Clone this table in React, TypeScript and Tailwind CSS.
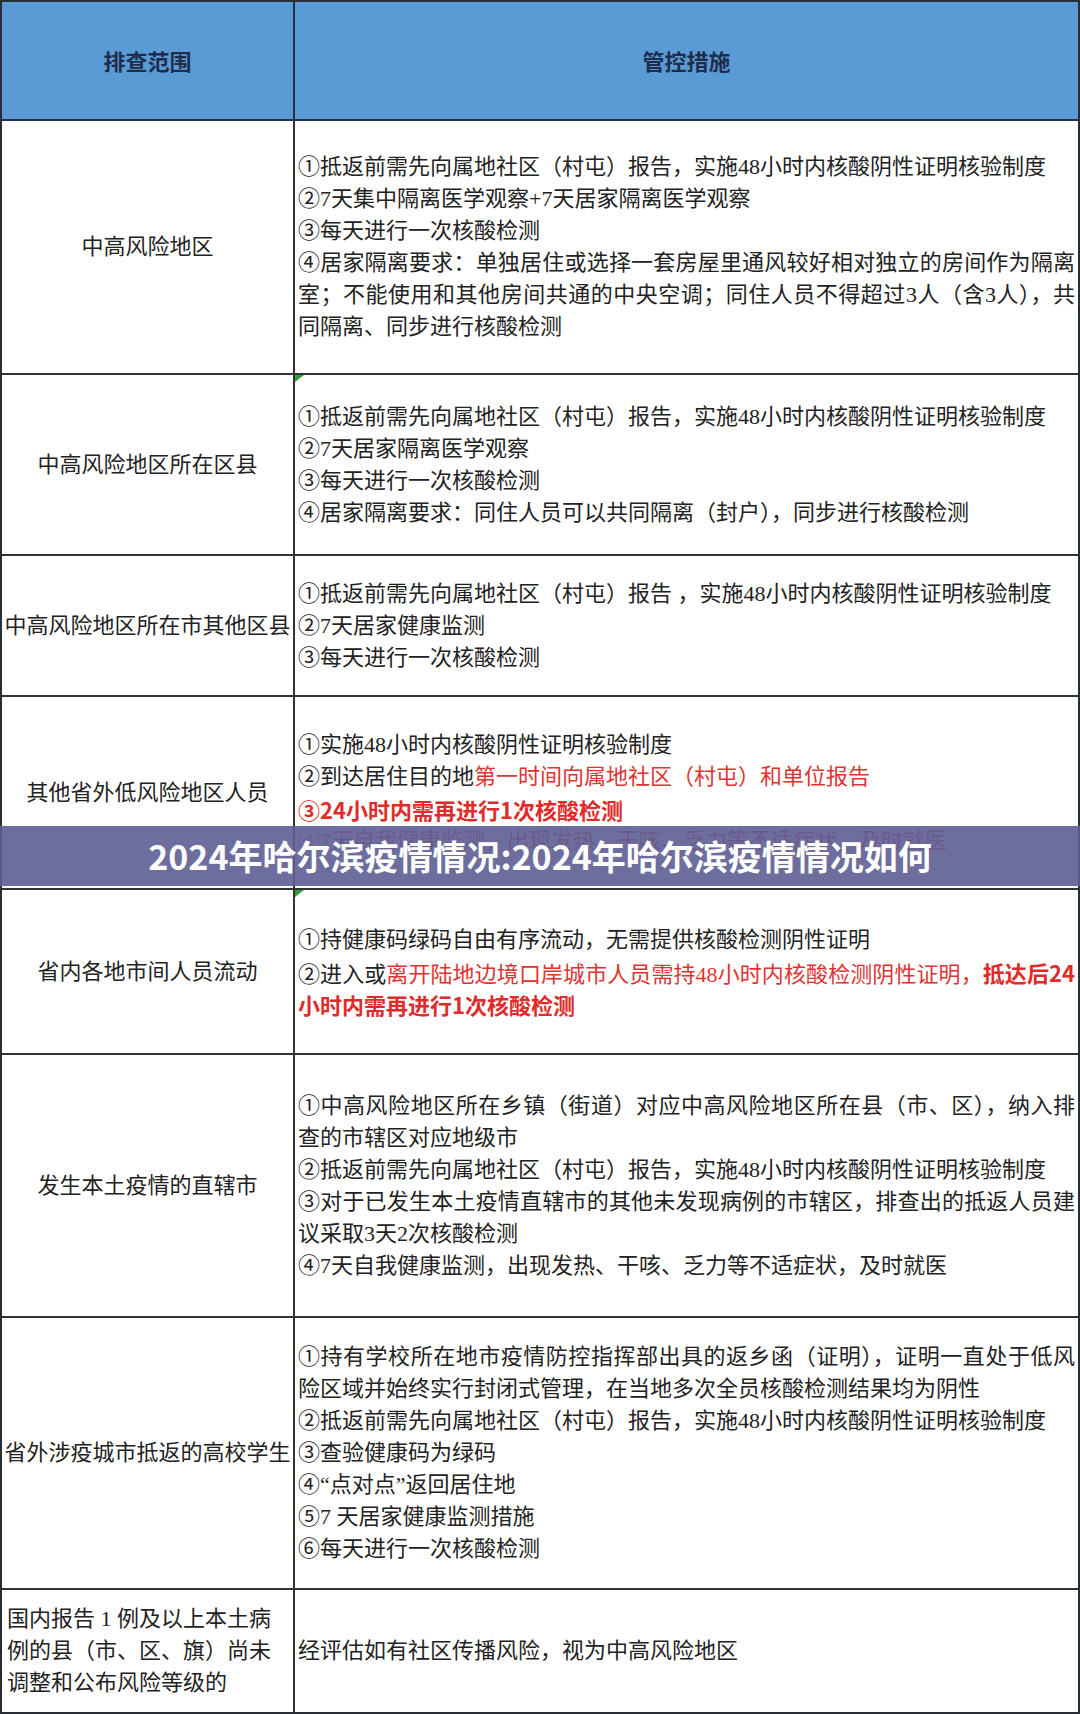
import React from 'react';

// A line segment: plain text, red text ('r') or bold red sans text ('rb')
type Seg = string | { t: string; k: 'r' | 'rb' };

interface Line {
  s: Seg[];
  j?: boolean; // justified to full width (wrapped line)
}

interface Row {
  h: string;
  left: string[];
  leftAlign?: boolean;
  marker?: boolean;
  lines: Line[];
}

const red = (t: string): Seg => ({ t, k: 'r' });
const redBold = (t: string): Seg => ({ t, k: 'rb' });

const rows: Row[] = [
  {
    h: 'h-[254px]',
    left: ['中高风险地区'],
    lines: [
      { s: ['①抵返前需先向属地社区（村屯）报告，实施48小时内核酸阴性证明核验制度'] },
      { s: ['②7天集中隔离医学观察+7天居家隔离医学观察'] },
      { s: ['③每天进行一次核酸检测'] },
      { s: ['④居家隔离要求：单独居住或选择一套房屋里通风较好相对独立的房间作为隔离'], j: true },
      { s: ['室；不能使用和其他房间共通的中央空调；同住人员不得超过3人（含3人），共'], j: true },
      { s: ['同隔离、同步进行核酸检测'] },
    ],
  },
  {
    h: 'h-[181px]',
    left: ['中高风险地区所在区县'],
    marker: true,
    lines: [
      { s: ['①抵返前需先向属地社区（村屯）报告，实施48小时内核酸阴性证明核验制度'] },
      { s: ['②7天居家隔离医学观察'] },
      { s: ['③每天进行一次核酸检测'] },
      { s: ['④居家隔离要求：同住人员可以共同隔离（封户），同步进行核酸检测'] },
    ],
  },
  {
    h: 'h-[141px]',
    left: ['中高风险地区所在市其他区县'],
    lines: [
      { s: ['①抵返前需先向属地社区（村屯）报告 ，实施48小时内核酸阴性证明核验制度'] },
      { s: ['②7天居家健康监测'] },
      { s: ['③每天进行一次核酸检测'] },
    ],
  },
  {
    h: 'h-[193px]',
    left: ['其他省外低风险地区人员'],
    lines: [
      { s: ['①实施48小时内核酸阴性证明核验制度'] },
      { s: ['②到达居住目的地', red('第一时间向属地社区（村屯）和单位报告')] },
      { s: [redBold('③24小时内需再进行1次核酸检测')] },
      { s: [red('④7天自我健康监测，出现发热、干咳、乏力等不适症状，及时就医')] },
    ],
  },
  {
    h: 'h-[165px]',
    left: ['省内各地市间人员流动'],
    marker: true,
    lines: [
      { s: ['①持健康码绿码自由有序流动，无需提供核酸检测阴性证明'] },
      {
        s: ['②进入或', red('离开陆地边境口岸城市人员需持48小时内核酸检测阴性证明，'), redBold('抵达后24')],
        j: true,
      },
      { s: [redBold('小时内需再进行1次核酸检测')] },
    ],
  },
  {
    h: 'h-[263px]',
    left: ['发生本土疫情的直辖市'],
    lines: [
      { s: ['①中高风险地区所在乡镇（街道）对应中高风险地区所在县（市、区），纳入排'], j: true },
      { s: ['查的市辖区对应地级市'] },
      { s: ['②抵返前需先向属地社区（村屯）报告，实施48小时内核酸阴性证明核验制度'] },
      { s: ['③对于已发生本土疫情直辖市的其他未发现病例的市辖区，排查出的抵返人员建'], j: true },
      { s: ['议采取3天2次核酸检测'] },
      { s: ['④7天自我健康监测，出现发热、干咳、乏力等不适症状，及时就医'] },
    ],
  },
  {
    h: 'h-[272px]',
    left: ['省外涉疫城市抵返的高校学生'],
    lines: [
      { s: ['①持有学校所在地市疫情防控指挥部出具的返乡函（证明），证明一直处于低风'], j: true },
      { s: ['险区域并始终实行封闭式管理，在当地多次全员核酸检测结果均为阴性'] },
      { s: ['②抵返前需先向属地社区（村屯）报告，实施48小时内核酸阴性证明核验制度'] },
      { s: ['③查验健康码为绿码'] },
      { s: ['④“点对点”返回居住地'] },
      { s: ['⑤7 天居家健康监测措施'] },
      { s: ['⑥每天进行一次核酸检测'] },
    ],
  },
  {
    h: 'h-[122px]',
    left: ['国内报告 1 例及以上本土病', '例的县（市、区、旗）尚未', '调整和公布风险等级的'],
    leftAlign: true,
    lines: [{ s: ['经评估如有社区传播风险，视为中高风险地区'] }],
  },
];

const renderSeg = (seg: Seg, i: number) => {
  if (typeof seg === 'string') return <span key={i}>{seg}</span>;
  if (seg.k === 'r') return <span key={i} className="text-[#de3431]">{seg.t}</span>;
  return (
    <span key={i} className="font-bold text-[#e02b2b] font-['Noto_Sans_CJK_SC',sans-serif]">
      {seg.t}
    </span>
  );
};

// little green comment marker in the corner of a cell
const Marker = () => (
  <svg className="absolute left-0 top-0" width="9" height="8" viewBox="0 0 9 8">
    <polygon points="0,0 9,0 0,7" fill="#2f9e3a" />
  </svg>
);

const App: React.FC = () => {
  return (
    <div className="relative w-[1080px] h-[1714px] bg-white text-[#222] text-[22px] font-['Liberation_Serif','Noto_Sans_CJK_SC',serif]">
      <div className="flex flex-col h-full border-2 border-[#2a2d33]">
        {/* header */}
        <div className="grid grid-cols-[293px_1fr] h-[119px] bg-[#5b9bd5] border-b-2 border-[#22324a] text-[#1d2d4b] font-bold font-['Noto_Sans_CJK_SC',sans-serif]">
          <div className="flex items-center justify-center border-r-2 border-[#22324a]">排查范围</div>
          <div className="flex items-center justify-center">管控措施</div>
        </div>

        {rows.map((row, ri) => (
          <div
            key={ri}
            className={`grid grid-cols-[293px_1fr] ${row.h} ${ri < rows.length - 1 ? 'border-b-2 border-[#333]' : ''}`}
          >
            <div
              className={`flex flex-col justify-center border-r-2 border-[#333] ${
                row.leftAlign ? 'items-start pl-[5px]' : 'items-center'
              }`}
            >
              {row.left.map((l, li) => (
                <div key={li} className="h-[32px] leading-[32px] whitespace-nowrap">
                  {l}
                </div>
              ))}
            </div>
            <div className="relative flex flex-col justify-center pl-[3px] pr-[3px]">
              {row.marker && <Marker />}
              {row.lines.map((line, li) => (
                <div
                  key={li}
                  className={`h-[32px] leading-[32px] ${
                    line.j ? 'text-justify [text-align-last:justify]' : 'whitespace-nowrap'
                  }`}
                >
                  {line.s.map(renderSeg)}
                </div>
              ))}
            </div>
          </div>
        ))}
      </div>

      {/* title banner laid over the table */}
      <div className="absolute left-0 top-[826px] w-full h-[60px] bg-[#5e5e93]/90 flex items-center justify-center">
        <span className="text-white font-bold text-[34px] leading-none font-['Noto_Sans_CJK_SC',sans-serif]">
          2024年哈尔滨疫情情况:2024年哈尔滨疫情情况如何
        </span>
      </div>
    </div>
  );
};

export default App;
